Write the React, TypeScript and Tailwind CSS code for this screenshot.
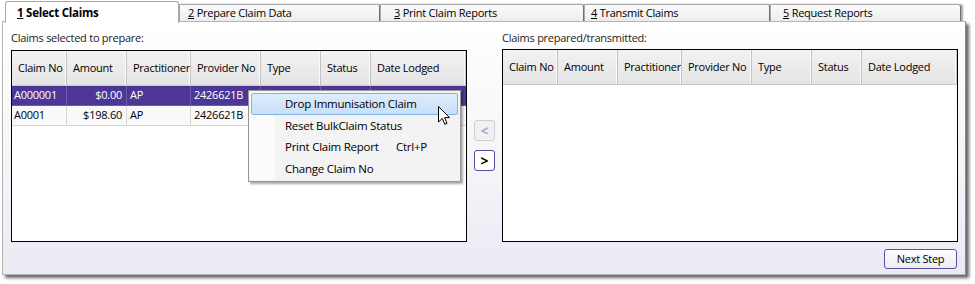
import React from 'react'

const cols = [
  { name: 'Claim No', w: 'w-[55px]' },
  { name: 'Amount', w: 'w-[60px]' },
  { name: 'Practitioner', w: 'w-[64px]' },
  { name: 'Provider No', w: 'w-[70px]' },
  { name: 'Type', w: 'w-[60px]' },
  { name: 'Status', w: 'w-[50px]' },
  { name: 'Date Lodged', w: 'flex-1' },
]

const rows = [
  { no: 'A000001', amount: '$0.00', prac: 'AP', prov: '2426621B', selected: true },
  { no: 'A0001', amount: '$198.60', prac: 'AP', prov: '2426621B', selected: false },
]

const tabs = [
  { key: '2', label: 'Prepare Claim Data', w: 'w-[201px]', pl: 'pl-[8px]' },
  { key: '3', label: 'Print Claim Reports', w: 'w-[204px]', pl: 'pl-[13px]' },
  { key: '4', label: 'Transmit Claims', w: 'w-[186px]', pl: 'pl-[6px]' },
  { key: '5', label: 'Request Reports', w: 'w-[191px]', pl: 'pl-[12px]' },
]

function GridHeader() {
  return (
    <div className="flex h-[35px] bg-gradient-to-b from-[#f2f2f2] to-[#e4e4e4] border-b border-[#c9c9c9]">
      {cols.map((c) => (
        <div
          key={c.name}
          className={`${c.w} flex items-center pl-[6px] border-r border-[#c3c3c3] shadow-[inset_-1px_0_0_#fafafa] whitespace-nowrap overflow-hidden`}
        >
          {c.name}
        </div>
      ))}
    </div>
  )
}

function ClaimRow({ row }: { row: typeof rows[number] }) {
  const base = row.selected ? 'bg-[#4d3796] text-white border-[#6c5aa8]' : 'bg-[#f9f9f9] text-black border-[#d6d6d6]'
  return (
    <div className={`flex h-[20px] border-b ${base}`}>
      <div className={`w-[55px] flex items-center pl-[2px] border-r ${base}`}>{row.no}</div>
      <div className={`w-[60px] flex items-center justify-end pr-[4px] border-r ${base}`}>{row.amount}</div>
      <div className={`w-[64px] flex items-center pl-[3px] border-r ${base}`}>{row.prac}</div>
      <div className={`w-[70px] flex items-center pl-[3px] border-r ${base}`}>{row.prov}</div>
      <div className={`w-[60px] border-r ${base}`}></div>
      <div className={`w-[50px] border-r ${base}`}></div>
      <div className="flex-1"></div>
    </div>
  )
}

function Cursor() {
  return (
    <svg className="absolute left-[438px] top-[106px]" width="13" height="20" viewBox="0 0 13 20">
      <path
        d="M0.5 0.5 L0.5 16 L4.3 12.4 L6.8 18.3 L9 17.3 L6.6 11.6 L11.5 11.6 Z"
        fill="white"
        stroke="black"
        strokeWidth="1"
        strokeLinejoin="miter"
      />
    </svg>
  )
}

export default function App() {
  return (
    <div className="relative w-[975px] h-[284px] bg-white text-[11px] tracking-[-0.25px] text-black font-['Segoe_UI','Open_Sans',sans-serif] overflow-hidden">
      {/* tabs */}
      <div className="absolute left-[5px] top-[1px] z-20 w-[174px] h-[22px] bg-white border border-b-0 border-[#a9a9a9] rounded-t-[3px] flex items-center pl-[11px] font-bold text-[11.5px]">
        <span className="underline">1</span>&nbsp;Select Claims
      </div>
      <div className="flex pl-[179px] pt-[4px]">
        {tabs.map((t) => (
          <div
            key={t.key}
            className={`${t.w} ${t.pl} h-[18px] flex items-center bg-gradient-to-b from-[#fbfbfb] to-[#ececec] border border-b-0 border-[#a8a8a8] border-r-[#6f6f6f] rounded-tr-[3px] shadow-[2px_0_2px_rgba(0,0,0,0.35)] whitespace-nowrap`}
          >
            <span className="underline">{t.key}</span>&nbsp;{t.label}
          </div>
        ))}
      </div>

      {/* panel */}
      <div className="absolute left-[2px] top-[21px] w-[964px] h-[254px] border border-[#b5b5b5] border-r-[#8a8a8a] bg-gradient-to-b from-white via-[#f6f6fa] to-[#eaeaf3] shadow-[3px_3px_3px_rgba(0,0,0,0.6)] pl-[8px] pr-[7px] pt-[9px] flex flex-col">
        <div className="flex">
          <div className="w-[456px] flex flex-col">
            <div className="h-[14px] leading-[14px] mb-[5px] text-[#222]">Claims selected to prepare:</div>
            <div className="h-[192px] border border-black bg-white flex flex-col">
              <GridHeader />
              {rows.map((r) => (
                <ClaimRow key={r.no} row={r} />
              ))}
            </div>
          </div>

          <div className="w-[35px] flex flex-col items-center pt-[89px] gap-[9px]">
            <div className="w-[21px] h-[21px] rounded-[3px] border border-[#cfcfcf] bg-[#f1f1f1] flex items-center justify-center text-[#a3aad6] text-[14px] font-bold leading-none">
              &lt;
            </div>
            <div className="w-[21px] h-[21px] rounded-[3px] border border-[#5b4aa3] bg-white flex items-center justify-center text-black text-[14px] font-bold leading-none">
              &gt;
            </div>
          </div>

          <div className="w-[456px] flex flex-col">
            <div className="h-[14px] leading-[14px] mb-[4px] text-[#222]">Claims prepared/transmitted:</div>
            <div className="h-[193px] border border-black bg-white flex flex-col">
              <GridHeader />
            </div>
          </div>
        </div>

        <div className="flex justify-end mt-[7px] pr-[1px]">
          <div className="w-[73px] h-[20px] rounded-[3px] border border-[#5d4fa5] bg-gradient-to-b from-white to-[#ececec] flex items-center justify-center">
            Next Step
          </div>
        </div>
      </div>

      {/* context menu */}
      <div className="absolute left-[248px] top-[90px] z-30 w-[213px] h-[92px] border border-[#979797] bg-[#f3f3f3] shadow-[2px_2px_2px_rgba(0,0,0,0.35)] p-[2px] flex flex-col">
        <div className="absolute left-[1px] top-[1px] bottom-[1px] w-[25px] bg-[#fbfbfb]"></div>
        {[
          { label: 'Drop Immunisation Claim', hot: true },
          { label: 'Reset BulkClaim Status' },
          { label: 'Print Claim Report', key: 'Ctrl+P' },
          { label: 'Change Claim No' },
        ].map((m) => (
          <div
            key={m.label}
            className={`relative h-[22px] flex items-center pl-[33px] whitespace-nowrap text-[11.5px] ${
              m.hot ? 'rounded-[2px] border border-[#7eb4ea] bg-gradient-to-b from-[#dcecfc] to-[#c9e0f7]' : 'border border-transparent'
            }`}
          >
            <span className="w-[111px]">{m.label}</span>
            {m.key && <span>{m.key}</span>}
          </div>
        ))}
      </div>

      <div className="absolute inset-0 z-40 pointer-events-none">
        <Cursor />
      </div>
    </div>
  )
}
